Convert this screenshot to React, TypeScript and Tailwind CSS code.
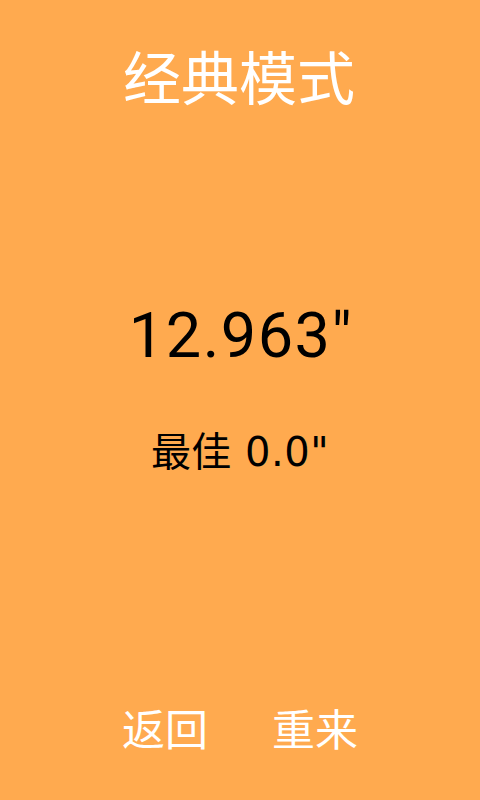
import React from 'react';

const FONT = 'font-["Roboto","Noto_Sans_CJK_SC",sans-serif]';

export default function App() {
    return (
        <div className={`${FONT} flex h-[800px] w-full flex-col items-center bg-[#ffaa4f]`}>
            {/* Mode title */}
            <div className="pt-[52px] pr-[2px] text-[58px] leading-[56px] text-white">经典模式</div>

            {/* Current time */}
            <div className="mt-[196px] pl-[2px] text-[63px] leading-[64px] tracking-[1.5px] text-black">12.963"</div>

            {/* Best record */}
            <div className='mt-[64px] font-["DejaVu_Sans","Noto_Sans_CJK_SC",sans-serif] text-[40px] leading-[40px] tracking-[0.5px] text-black'>
                最佳 0.0"
            </div>

            {/* Bottom actions */}
            <div className="mt-auto mb-[48px] flex items-center gap-[64px] text-[43px] leading-[42px] text-white">
                <button className="cursor-pointer">返回</button>
                <button className="cursor-pointer">重来</button>
            </div>
        </div>
    );
}
